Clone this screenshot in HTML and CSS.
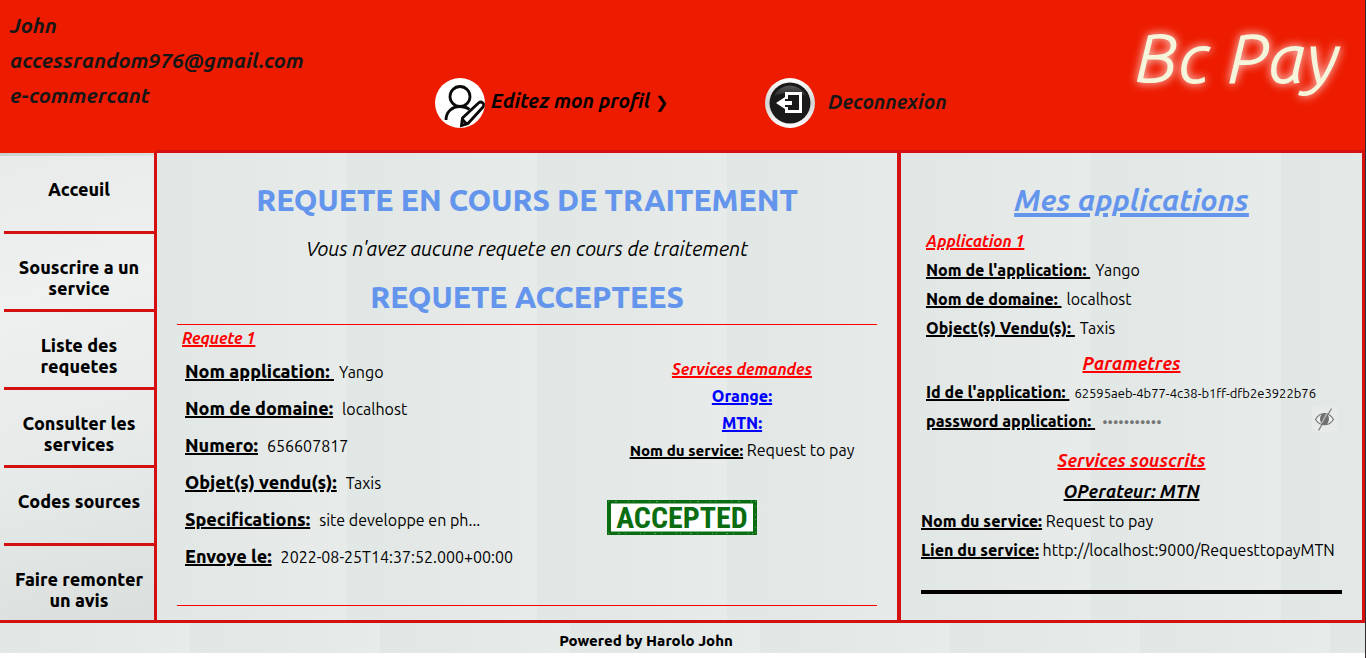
FILE: index.html
```html
<!DOCTYPE html>
<html lang="fr">
<head>
<meta charset="utf-8">
<title>Bc Pay</title>
<link rel="stylesheet" href="styles.css">
</head>
<body>
<div class="page">
  <header class="header">
    <div class="user">
      <p>John</p>
      <p>accessrandom976@gmail.com</p>
      <p>e-commercant</p>
    </div>
    <button class="action action-edit" type="button">
      <svg class="action-icon" viewBox="0 0 50 50" aria-hidden="true">
        <defs><clipPath id="disc"><circle cx="25" cy="25" r="25"/></clipPath></defs>
        <circle cx="25" cy="25" r="25" fill="#fff"/>
        <g clip-path="url(#disc)" fill="none" stroke="#0a0a0a" stroke-width="2.800">
          <circle cx="25" cy="18.500" r="10"/>
          <path d="M11 42C11 34 17 28.500 25 28.500c4 0 7 1 9.500 3"/>
          <path d="M26.500 47.500l1-7.500L43.500 25c1.500-1.300 3.300-1 4.300 0s1.300 2.800 0 4.300L33 45.500z" fill="#fff"/>
          <path d="M27 41l5 5.500"/>
        </g>
      </svg>
      <span>Editez mon profil <span class="chevron">❯</span></span>
    </button>
    <button class="action action-logout" type="button">
      <svg class="action-icon" viewBox="0 0 50 50" aria-hidden="true">
        <defs>
          <linearGradient id="rim" x1="0" y1="0" x2="0" y2="1"><stop offset="0" stop-color="#fff"/><stop offset=".5" stop-color="#d4d4d4"/><stop offset="1" stop-color="#fff"/></linearGradient>
          <linearGradient id="gloss" x1="0" y1="0" x2="0" y2="1"><stop offset="0" stop-color="#555"/><stop offset="1" stop-color="#2c2c2c"/></linearGradient>
        </defs>
        <circle cx="25" cy="25" r="25" fill="url(#rim)"/>
        <circle cx="25" cy="25" r="20.500" fill="#191919"/>
        <path d="M9 18a17.500 17.500 0 0 1 32 0c-9-4-23-4-32 0z" fill="url(#gloss)"/>
        <path d="M21.500 21v-5.500h14v18h-14V29" fill="none" stroke="#fff" stroke-width="3"/>
        <path d="M11 25l9-6v4h7v4h-7v4z" fill="#fff"/>
      </svg>
      <span>Deconnexion</span>
    </button>
    <h1 class="logo">Bc Pay</h1>
  </header>

  <div class="columns">
    <nav class="menu">
      <a class="menu-link" href="#">Acceuil</a>
      <a class="menu-link" href="#">Souscrire a un service</a>
      <a class="menu-link" href="#">Liste des requetes</a>
      <a class="menu-link" href="#">Consulter les services</a>
      <a class="menu-link" href="#">Codes sources</a>
      <a class="menu-link" href="#">Faire remonter un avis</a>
    </nav>

    <main class="requests">
      <h2 class="title">REQUETE EN COURS DE TRAITEMENT</h2>
      <p class="empty">Vous n'avez aucune requete en cours de traitement</p>
      <h2 class="title">REQUETE ACCEPTEES</h2>
      <article class="request">
        <h3 class="request-name">Requete 1</h3>
        <div class="request-body">
          <div class="request-facts">
            <p><b>Nom application:&nbsp;</b><span>Yango</span></p>
            <p><b>Nom de domaine:</b><span class="wide">localhost</span></p>
            <p><b>Numero:</b><span class="wide">656607817</span></p>
            <p><b>Objet(s) vendu(s):</b><span class="wide">Taxis</span></p>
            <p><b>Specifications:</b><span class="wide">site developpe en ph...</span></p>
            <p><b>Envoye le:</b><span class="wide">2022-08-25T14:37:52.000+00:00</span></p>
          </div>
          <div class="request-services">
            <h4 class="services-title">Services demandes</h4>
            <p class="operator">Orange:</p>
            <p class="operator">MTN:</p>
            <p class="service"><b>Nom du service:</b> Request to pay</p>
            <svg class="stamp" viewBox="0 0 150 35" role="img" aria-label="ACCEPTED">
              <rect x="2" y="1.500" width="146" height="32" fill="#fff" stroke="#0b6d12" stroke-width="4"/>
              <text class="stamp-text" x="75" y="28" text-anchor="middle">ACCEPTED</text>
              <g fill="none" stroke="#a9cfaa" stroke-width="1" stroke-opacity=".5">
                <path d="M1 1.500H149" stroke-dasharray="1 6 2 11 1 4 1 15"/>
                <path d="M1 33.500H149" stroke-dasharray="1 9 2 5 1 14 1 3"/>
                <path d="M148.500 1V34" stroke-dasharray="1 4 1 7"/>
              </g>
            </svg>
          </div>
        </div>
      </article>
    </main>

    <aside class="apps">
      <h2 class="apps-title">Mes applications</h2>
      <section class="app">
        <div class="app-facts">
          <h3 class="app-name">Application 1</h3>
          <p><b>Nom de l'application:&nbsp;</b><span>Yango</span></p>
          <p><b>Nom de domaine:&nbsp;</b><span>localhost</span></p>
          <p><b>Object(s) Vendu(s):&nbsp;</b><span>Taxis</span></p>
        </div>
        <h3 class="app-heading">Parametres</h3>
        <div class="app-facts">
          <p><b>Id de l'application:&nbsp;</b><span class="id">62595aeb-4b77-4c38-b1ff-dfb2e3922b76</span></p>
          <div class="password">
            <label for="app-password">password application:&nbsp;</label>
            <input id="app-password" type="password" value="abcdefghijk" readonly>
            <button class="reveal" type="button" aria-label="Afficher">
              <svg viewBox="0 0 25 25" aria-hidden="true">
                <path d="M3.500 12.500C8 4.500 17 4.500 21.500 12.500 17 19.500 8 19.500 3.500 12.500z" fill="#eef0f0" stroke="#777" stroke-width="1.200"/>
                <ellipse cx="12.500" cy="12" rx="4.500" ry="6" fill="#6f6f6f"/>
                <path d="M14.500 7l-5 10" stroke="#bbb" stroke-width="1.500"/>
                <path d="M19.500 1.500l-13 22" stroke="#777" stroke-width="1.200"/>
              </svg>
            </button>
          </div>
        </div>
        <h3 class="app-heading app-heading-services">Services souscrits</h3>
        <h4 class="app-operator">OPerateur: MTN</h4>
        <div class="app-service">
          <p><b>Nom du service:</b> Request to pay</p>
          <p><b>Lien du service:</b> http://localhost:9000/RequesttopayMTN</p>
        </div>
      </section>
    </aside>
  </div>

  <footer class="footer">Powered by Harolo John</footer>
</div>
</body>
</html>
```
FILE: styles.css
```css
* { box-sizing: border-box; }
html { background: #fff; }
body {
  margin: 0;
  color: #000;
  font: 16px/29px Ubuntu, "Noto Sans", sans-serif;
}
.page { min-height: 100vh; border-right: 1px solid #33292e; }
h1, h2, h3, h4, p { margin: 0; }
button { border: 0; padding: 0; background: none; color: inherit; font: inherit; cursor: pointer; }
b { font-weight: 800; text-decoration: underline 2px; }

.header {
  display: grid;
  grid-template-columns: 435fr 330fr 330fr 270fr;
  height: 150px;
  background: #ed1c00;
}
.user { padding: 8px 10px; color: #161616; font-size: 21px; font-weight: 700; font-style: italic; line-height: 35px; }
.action {
  display: flex;
  align-items: center;
  align-self: start;
  gap: 6px;
  margin-top: 78px;
  font-size: 20px;
  font-weight: 700;
  font-style: italic;
  line-height: 40px;
  white-space: nowrap;
}
.action span { padding-bottom: 2px; }
.action-edit > span { padding-bottom: 5px; }
.action-logout { gap: 13px; color: #161616; }
.action-icon { width: 50px; height: 50px; flex: none; }
.chevron { font-size: 16px; font-style: normal; font-weight: 400; line-height: 1; }
.logo {
  padding: 14px 26px 0 0;
  color: #f5f5dc;
  font-size: 70px;
  font-weight: 400;
  font-style: italic;
  line-height: 86px;
  text-align: right;
  text-shadow: 0 0 10px #fff;
  white-space: nowrap;
}

.columns { display: grid; grid-template-columns: 157px 744fr 464fr; }
.menu, .requests, .apps { border: 0 solid #d51010; border-width: 3px 0; }
.menu {
  padding-left: 4px;
  border-right-width: 3px;
  border-top-color: #ed1c00;
  background: linear-gradient(90deg, #cad2cf, #dce2df) 0 0 / 100% 3px no-repeat,
    linear-gradient(165deg, #e8ebea, #eff0f0 30%, #e6eae9 65%, #dadfdd);
}
.menu-link {
  display: block;
  height: 78px;
  padding: 23px 6px 0;
  border-bottom: 3px solid #d51010;
  color: #000;
  font-size: 18px;
  font-weight: 800;
  line-height: 21px;
  text-align: center;
  text-decoration: none;
}
.menu-link:first-child { height: 81px; padding-top: 26px; }
.menu-link:last-child { border-bottom: 0; height: 74px; }

.requests, .apps, .footer {
  background: repeating-linear-gradient(90deg, #e1e7e5, #e7ebea 190px);
}
.requests { padding: 27px 20px 0; border-right-width: 4px; }
.title { color: #6495ed; font-size: 30px; font-weight: 800; line-height: 40px; text-align: center; }
.empty { margin: 9px 0 8px; font-size: 20px; font-style: italic; line-height: 40px; text-align: center; }
.request { margin-top: 7px; height: 282px; border: 0 solid #f00; border-width: 1px 0; }
.request-name { padding-left: 5px; color: #f00; font-size: 16px; font-weight: 700; font-style: italic; line-height: 27px; text-decoration: underline 2px; }
.request-body { display: grid; grid-template-columns: 430fr 270fr; }
.request-facts { padding: 1px 0 0 8px; font-size: 18px; line-height: 37px; }
.request-facts span { margin-left: 5px; font-size: 16px; line-height: 1; }
.request-facts .wide { margin-left: 9px; }
.request-services { padding-top: 4px; line-height: 27px; text-align: center; }
.services-title { color: #f00; font-size: 16px; font-weight: 700; font-style: italic; text-decoration: underline 2px; }
.operator { color: #00f; font-weight: 800; text-decoration: underline 2px; }
.service b { font-size: 15px; line-height: 1; }
.stamp { display: block; width: 150px; height: 35px; margin-top: 36px; }
.stamp-text { fill: #0b6d12; font: 700 30px "Ubuntu Condensed", "Roboto Condensed", "Open Sans Condensed", sans-serif; }

.apps { padding: 27px 20px 0; border-right-width: 3px; }
.apps-title { color: #6495ed; font-size: 30px; font-weight: 700; font-style: italic; line-height: 40px; text-align: center; text-decoration: underline 4px; }
.app { height: 374px; padding-top: 7px; border-bottom: 4px solid #000; }
.app-facts { padding: 0 5px; }
.app-facts span { margin-left: 5px; }
.app-name { color: #f00; font-size: 16px; font-weight: 700; font-style: italic; text-decoration: underline 2px; }
.app-heading { margin-top: 5px; color: #f00; font-size: 18px; font-weight: 700; font-style: italic; line-height: 30px; text-align: center; text-decoration: underline 2px; }
.app-heading-services { margin-top: 10px; }
.app-facts .id { font-size: 13px; line-height: 1; }
.password { display: flex; align-items: center; gap: 5px; height: 28px; }
.password label { font-weight: 800; text-decoration: underline 2px; }
.password input { flex: 1; min-width: 0; padding: 0 2px; border: 0; outline: 0; background: none; color: #757575; font: 15px Ubuntu, "Noto Sans", sans-serif; }
.reveal { align-self: flex-start; width: 25px; height: 25px; background: #e7eae9; }
.reveal svg { display: block; width: 25px; height: 25px; }
.app-operator { margin-top: 2px; font-size: 18px; font-weight: 700; font-style: italic; line-height: 29px; text-align: center; text-decoration: underline 2px; }
.app-service { padding-top: 1px; white-space: nowrap; }

.footer { height: 30px; padding-right: 73px; font-size: 15px; font-weight: 800; line-height: 36px; text-align: center; }
```
